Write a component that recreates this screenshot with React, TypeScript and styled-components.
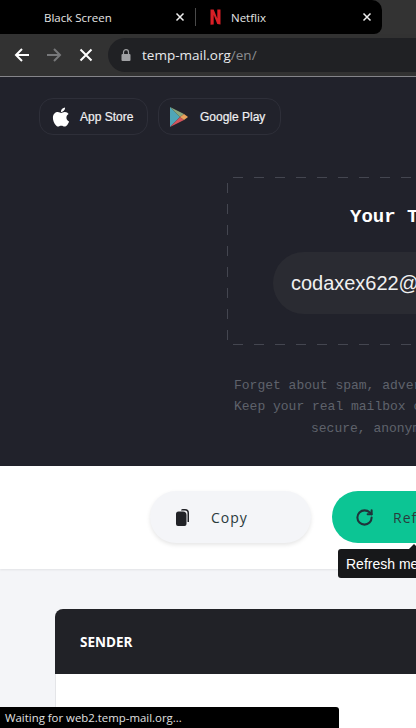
import styled, { createGlobalStyle } from "styled-components";
import { FaApple } from "react-icons/fa";
import { RotateCw } from "lucide-react";

const GlobalStyle = createGlobalStyle`
  html, body {
    margin: 0;
    padding: 0;
    width: 416px;
    height: 728px;
    overflow: hidden;
    background: #f4f5f8;
  }
  * {
    box-sizing: border-box;
  }
`;

const Page = styled.div`
  position: relative;
  width: 416px;
  height: 728px;
  overflow: hidden;
  display: flex;
  flex-direction: column;
  font-family: "Open Sans", "Liberation Sans", sans-serif;
`;

const TabStrip = styled.div`
  height: 34px;
  flex: none;
  background: #333;
`;

const TabGroup = styled.div`
  width: 382px;
  height: 34px;
  background: #000;
  border-radius: 0 10px 8px 0;
  display: flex;
`;

const Tab = styled.div<{ $width: number; $pad: number }>`
  width: ${(p) => p.$width}px;
  flex: none;
  padding: 0 10px 0 ${(p) => p.$pad}px;
  display: flex;
  align-items: center;
  color: #e6e6e6;
  font-size: 11.5px;
`;

const TabTitle = styled.span<{ $gap?: number }>`
  flex: 1;
  margin-left: ${(p) => p.$gap ?? 0}px;
`;

const TabDivider = styled.div`
  width: 1px;
  height: 18px;
  margin-top: 8px;
  background: #4a4a4a;
  flex: none;
`;

const Toolbar = styled.div`
  height: 43px;
  flex: none;
  background: #323232;
  border-bottom: 1px solid #85858a;
  display: flex;
  align-items: center;
  padding-left: 14px;
`;

const NavIcon = styled.svg<{ $gap: number }>`
  width: 16px;
  height: 16px;
  flex: none;
  margin-right: ${(p) => p.$gap}px;
`;

const AddressBar = styled.div`
  flex: 1;
  height: 34px;
  background: #202124;
  border-radius: 17px 0 0 17px;
  display: flex;
  align-items: center;
  padding-left: 13px;
  font-size: 13.5px;
  color: #e8eaed;
`;

const LockIcon = styled.svg`
  width: 10px;
  height: 12px;
  margin-right: 11px;
  flex: none;
`;

const UrlRest = styled.span`
  color: #8b8d90;
`;

const Hero = styled.div`
  height: 389px;
  flex: none;
  background: #21222b;
  padding: 21px 0 0 39px;
`;

const StoreRow = styled.div`
  display: flex;
  gap: 10px;
`;

const StoreButton = styled.div<{ $width: number; $gap: number }>`
  width: ${(p) => p.$width}px;
  height: 37px;
  border: 1px solid #2e2f39;
  border-radius: 14px;
  display: flex;
  align-items: center;
  padding-left: 10px;
  gap: ${(p) => p.$gap}px;
  color: #f0f0f2;
  font-family: "Liberation Sans", Arial, sans-serif;
  font-size: 12px;
  -webkit-text-stroke: 0.2px #f0f0f2;
`;

const AppleIcon = styled(FaApple)`
  width: 22px;
  height: 22px;
  color: #fff;
  flex: none;
`;

const PlayIcon = styled.svg`
  width: 20px;
  height: 22px;
  flex: none;
`;

const Center = styled.div`
  width: 640px;
  margin: 42px 0 0 188px;
`;

/* long dashes: a plain dashed border is too short here */
const DashedBox = styled.div`
  height: 168px;
  border-radius: 4px;
  padding: 29px 0 0 46px;
  background-image:
    repeating-linear-gradient(to right, #444650 0 10px, transparent 10px 21px),
    repeating-linear-gradient(to right, #444650 0 10px, transparent 10px 21px),
    repeating-linear-gradient(to bottom, #444650 0 10px, transparent 10px 21px);
  background-size: 100% 1px, 100% 1px, 1px 100%;
  background-position: 6px 0, 6px 100%, 0 6px;
  background-repeat: no-repeat;
`;

const BoxTitle = styled.div`
  margin-left: 77px;
  font-family: "Liberation Mono", monospace;
  font-weight: 700;
  font-size: 19px;
  line-height: 23px;
  color: #fff;
  white-space: nowrap;
`;

const EmailPill = styled.div`
  width: 420px;
  height: 62px;
  margin-top: 23px;
  border-radius: 31px;
  background: #2a2b32;
  padding-left: 18px;
  display: flex;
  align-items: center;
  font-family: "Liberation Sans", Arial, sans-serif;
  font-size: 20px;
  letter-spacing: -0.03px;
  color: #f0f0f0;
`;

const Blurb = styled.div`
  margin: 30px 0 0 7px;
  font-family: "Liberation Mono", monospace;
  font-size: 13px;
  line-height: 21px;
  color: #5f626b;
  white-space: pre;
`;

const BlurbCentered = styled.div`
  padding: 1px 0 0 77px;
`;

const ActionSection = styled.div`
  height: 103px;
  flex: none;
  background: #fff;
  box-shadow: 0 1px 2px rgba(0, 0, 0, 0.08);
  padding: 25px 0 0 150px;
  display: flex;
  gap: 21px;
  position: relative;
`;

const ActionButton = styled.div<{ $primary?: boolean }>`
  width: ${(p) => (p.$primary ? 200 : 161)}px;
  height: 52px;
  flex: none;
  border-radius: 26px;
  background: ${(p) => (p.$primary ? "#0cc594" : "#f4f5f8")};
  box-shadow: ${(p) => (p.$primary ? "none" : "0 2px 4px rgba(0, 0, 0, 0.1)")};
  display: flex;
  align-items: center;
  padding-left: ${(p) => (p.$primary ? 23 : 26)}px;
  gap: ${(p) => (p.$primary ? 19 : 22)}px;
  color: #2a3a3c;
  font-size: 14px;
  letter-spacing: 1px;
`;

const CopyIcon = styled.svg`
  width: 13px;
  height: 17px;
  flex: none;
`;

const RefreshIcon = styled(RotateCw)`
  width: 19px;
  height: 19px;
  color: #20333a;
  flex: none;
`;

const Tooltip = styled.div`
  position: absolute;
  left: 338px;
  top: 549px;
  width: 120px;
  height: 29px;
  background: #17181a;
  border-radius: 3px;
  padding-left: 8px;
  display: flex;
  align-items: center;
  color: #fff;
  font-family: "Liberation Sans", Arial, sans-serif;
  font-size: 14px;
  white-space: nowrap;

  &::before {
    content: "";
    position: absolute;
    left: 71px;
    top: -5px;
    border-left: 5px solid transparent;
    border-right: 5px solid transparent;
    border-bottom: 5px solid #17181a;
  }
`;

const InboxSection = styled.div`
  flex: 1;
  background: #f4f5f8;
  padding: 40px 0 0 55px;
`;

const Card = styled.div`
  width: 500px;
  border-radius: 8px 0 0 0;
  overflow: hidden;
`;

const CardHeader = styled.div`
  height: 65px;
  background: #212227;
  padding-left: 25px;
  display: flex;
  align-items: center;
  color: #fff;
  font-size: 13.5px;
  font-weight: 700;
`;

const CardBody = styled.div`
  height: 75px;
  background: #fff;
  border-left: 1px solid #e4e5e8;
`;

const StatusBar = styled.div`
  position: absolute;
  left: 0;
  bottom: 0;
  width: 339px;
  height: 21px;
  background: #000;
  border-radius: 0 3px 0 0;
  padding-left: 5px;
  display: flex;
  align-items: center;
  color: #e0e0e0;
  font-size: 11.4px;
`;

export default function App() {
  return (
    <>
      <GlobalStyle />
      <Page>
        <TabStrip>
          <TabGroup>
            <Tab $width={195} $pad={44}>
              <TabTitle>Black Screen</TabTitle>
              <svg width="10" height="10" viewBox="0 0 10 10">
                <path d="M1.5 1.5l7 7M8.5 1.5l-7 7" stroke="#eee" strokeWidth="1.5" />
              </svg>
            </Tab>
            <TabDivider />
            <Tab $width={186} $pad={14}>
              <svg width="11" height="16" viewBox="0 0 11 16">
                <path d="M0.5 0.5h3.2l3.6 9V0.5h3.2v15l-3.2-.5-3.6-9v9.4l-3.2.4z" fill="#d81f26" />
              </svg>
              <TabTitle $gap={10}>Netflix</TabTitle>
              <svg width="10" height="10" viewBox="0 0 10 10">
                <path d="M1.5 1.5l7 7M8.5 1.5l-7 7" stroke="#eee" strokeWidth="1.5" />
              </svg>
            </Tab>
          </TabGroup>
        </TabStrip>
        <Toolbar>
          <NavIcon $gap={16} viewBox="0 0 16 16">
            <path d="M15 8H2M8 2L2 8l6 6" fill="none" stroke="#fff" strokeWidth="2" />
          </NavIcon>
          <NavIcon $gap={16} viewBox="0 0 16 16">
            <path d="M1 8h13M8 2l6 6-6 6" fill="none" stroke="#77787a" strokeWidth="2" />
          </NavIcon>
          <NavIcon $gap={14} viewBox="0 0 16 16">
            <path d="M2.5 2.5l11 11M13.5 2.5l-11 11" fill="none" stroke="#fff" strokeWidth="2" />
          </NavIcon>
          <AddressBar>
            <LockIcon viewBox="0 0 10 12">
              <path d="M2.5 5V3.2a2.5 2.5 0 0 1 5 0V5" fill="none" stroke="#a0a1a4" strokeWidth="1.2" />
              <rect x="0.5" y="5" width="9" height="7" rx="1" fill="#a0a1a4" />
            </LockIcon>
            <span>
              temp-mail.org<UrlRest>/en/</UrlRest>
            </span>
          </AddressBar>
        </Toolbar>
        <Hero>
          <StoreRow>
            <StoreButton $width={109} $gap={8}>
              <AppleIcon />
              App Store
            </StoreButton>
            <StoreButton $width={123} $gap={11}>
              <PlayIcon viewBox="0 0 20 22">
                <polygon points="1,1 11,11 1,21" fill="#4fa6b8" />
                <polygon points="1,1 15,8 11,11" fill="#8aa77c" />
                <polygon points="1,21 15,14 11,11" fill="#d4545c" />
                <polygon points="15,8 19,11 15,14 11,11" fill="#e8a25c" />
              </PlayIcon>
              Google Play
            </StoreButton>
          </StoreRow>
          <Center>
            <DashedBox>
              <BoxTitle>Your Temporary Email Address</BoxTitle>
              <EmailPill>codaxex622@kluweb.com</EmailPill>
            </DashedBox>
            <Blurb>
              Forget about spam, advertising mailings, hacking and attacking robots.
              {"\n"}Keep your real mailbox clean and secure. Temp Mail provides temporary,
              <BlurbCentered>secure, anonymous, free, disposable email address.</BlurbCentered>
            </Blurb>
          </Center>
        </Hero>
        <ActionSection>
          <ActionButton>
            <CopyIcon viewBox="0 0 13 17">
              <path d="M5 1.5A1.5 1.5 0 0 1 6.5 0H9a4 4 0 0 1 4 4v9h-1.5V4A2.5 2.5 0 0 0 9 1.5z" fill="#212227" />
              <path d="M0 5a2.5 2.5 0 0 1 2.5-2.5H7A3.5 3.5 0 0 1 10.5 6v9a2 2 0 0 1-2 2H2a2 2 0 0 1-2-2z" fill="#212227" />
            </CopyIcon>
            Copy
          </ActionButton>
          <ActionButton $primary>
            <RefreshIcon strokeWidth={2.6} />
            Refresh
          </ActionButton>
        </ActionSection>
        <InboxSection>
          <Card>
            <CardHeader>SENDER</CardHeader>
            <CardBody />
          </Card>
        </InboxSection>
        <Tooltip>Refresh messages</Tooltip>
        <StatusBar>Waiting for web2.temp-mail.org...</StatusBar>
      </Page>
    </>
  );
}
